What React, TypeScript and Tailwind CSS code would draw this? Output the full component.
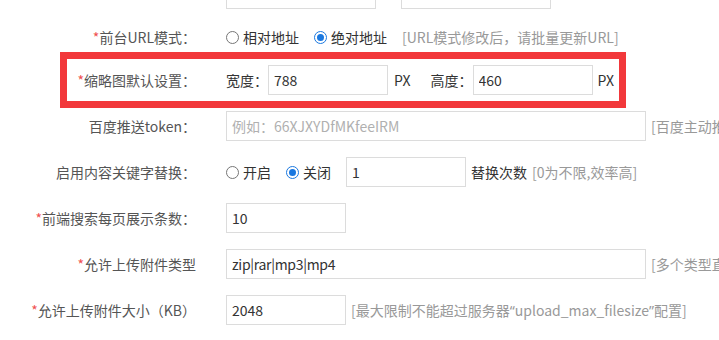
import React from 'react';

const Radio = ({ checked, label }: { checked?: boolean; label: string }) => (
    <label className="flex items-center">
        <span
            className={
                checked
                    ? 'w-[13px] h-[13px] rounded-full border border-[#1a78e0] flex items-center justify-center'
                    : 'w-[13px] h-[13px] rounded-full border border-[#767676] flex items-center justify-center'
            }
        >
            {checked && <span className="w-[7px] h-[7px] rounded-full bg-[#1a78e0]" />}
        </span>
        <span className="ml-[4px] text-[#333]">{label}</span>
    </label>
);

const Field = ({ value, placeholder, width }: { value?: string; placeholder?: string; width: string }) => (
    <input
        readOnly
        defaultValue={value}
        placeholder={placeholder}
        className={`${width} h-[30px] border border-[#dcdcdc] bg-white px-[5px] text-[#333] placeholder:text-[#b0b0b0] outline-none`}
    />
);

const Label = ({ text, required, width = 'w-[196px]' }: { text: string; required?: boolean; width?: string }) => (
    <div className={`${width} shrink-0 text-right text-[#555]`}>
        {required && <span className="text-[#f05050]">*</span>}
        {text}
    </div>
);

const Hint = ({ children }: { children: React.ReactNode }) => (
    <span className="ml-[5px] text-[#999]">{children}</span>
);

const App: React.FC = () => {
    return (
        <div className="w-[719px] h-[340px] overflow-hidden bg-white whitespace-nowrap text-[14px] leading-[20px] font-['Noto_Sans_CJK_SC',sans-serif]">
            {/* partially scrolled-off row */}
            <div className="h-[9px] overflow-hidden flex items-end">
                <div className="ml-[226px] w-[150px] h-[30px] border border-[#dcdcdc] shrink-0" />
                <div className="ml-[25px] w-[150px] h-[30px] border border-[#dcdcdc] shrink-0" />
            </div>

            <div className="mt-[13px] h-[30px] flex items-center">
                <Label text="前台URL模式：" required />
                <div className="ml-[30px] flex items-center gap-[15px]">
                    <Radio label="相对地址" />
                    <Radio label="绝对地址" checked />
                    <span className="text-[#999]">[URL模式修改后，请批量更新URL]</span>
                </div>
            </div>

            <div className="ml-[60px] w-[566px] h-[56px] border-[7px] border-[#f2383b] flex items-center">
                <Label text="缩略图默认设置：" required width="w-[129px]" />
                <div className="ml-[30px] flex items-center">
                    <span className="text-[#333]">宽度：</span>
                    <Field value="788" width="w-[120px]" />
                    <span className="ml-[6px] text-[#333]">PX</span>
                    <span className="ml-[20px] text-[#333]">高度：</span>
                    <Field value="460" width="w-[120px]" />
                    <span className="ml-[5px] text-[#333]">PX</span>
                </div>
            </div>

            <div className="mt-[3px] h-[30px] flex items-center">
                <Label text="百度推送token：" />
                <div className="ml-[30px] flex items-center">
                    <Field placeholder="例如：66XJXYDfMKfeeIRM" width="w-[420px]" />
                    <Hint>[百度主动推送链接]</Hint>
                </div>
            </div>

            <div className="mt-4 h-[30px] flex items-center">
                <Label text="启用内容关键字替换：" />
                <div className="ml-[30px] flex items-center gap-[15px]">
                    <Radio label="开启" />
                    <Radio label="关闭" checked />
                    <div className="flex items-center">
                        <Field value="1" width="w-[120px]" />
                        <span className="ml-[5px] text-[#333]">替换次数</span>
                        <Hint>[0为不限,效率高]</Hint>
                    </div>
                </div>
            </div>

            <div className="mt-4 h-[30px] flex items-center">
                <Label text="前端搜索每页展示条数：" required />
                <div className="ml-[30px] flex items-center">
                    <Field value="10" width="w-[120px]" />
                </div>
            </div>

            <div className="mt-4 h-[30px] flex items-center">
                <Label text="允许上传附件类型" required />
                <div className="ml-[30px] flex items-center">
                    <Field value="zip|rar|mp3|mp4" width="w-[420px] tracking-[-0.3px]" />
                    <Hint>[多个类型直接用|隔开]</Hint>
                </div>
            </div>

            <div className="mt-4 h-[30px] flex items-center">
                <Label text="允许上传附件大小（KB）" required />
                <div className="ml-[30px] flex items-center">
                    <Field value="2048" width="w-[120px]" />
                    <Hint>
                        [最大限制不能超过服务器<span className="font-['Noto_Sans',sans-serif]">“</span>upload_max_filesize
                        <span className="font-['Noto_Sans',sans-serif]">”</span>配置]
                    </Hint>
                </div>
            </div>
        </div>
    );
};

export default App;
